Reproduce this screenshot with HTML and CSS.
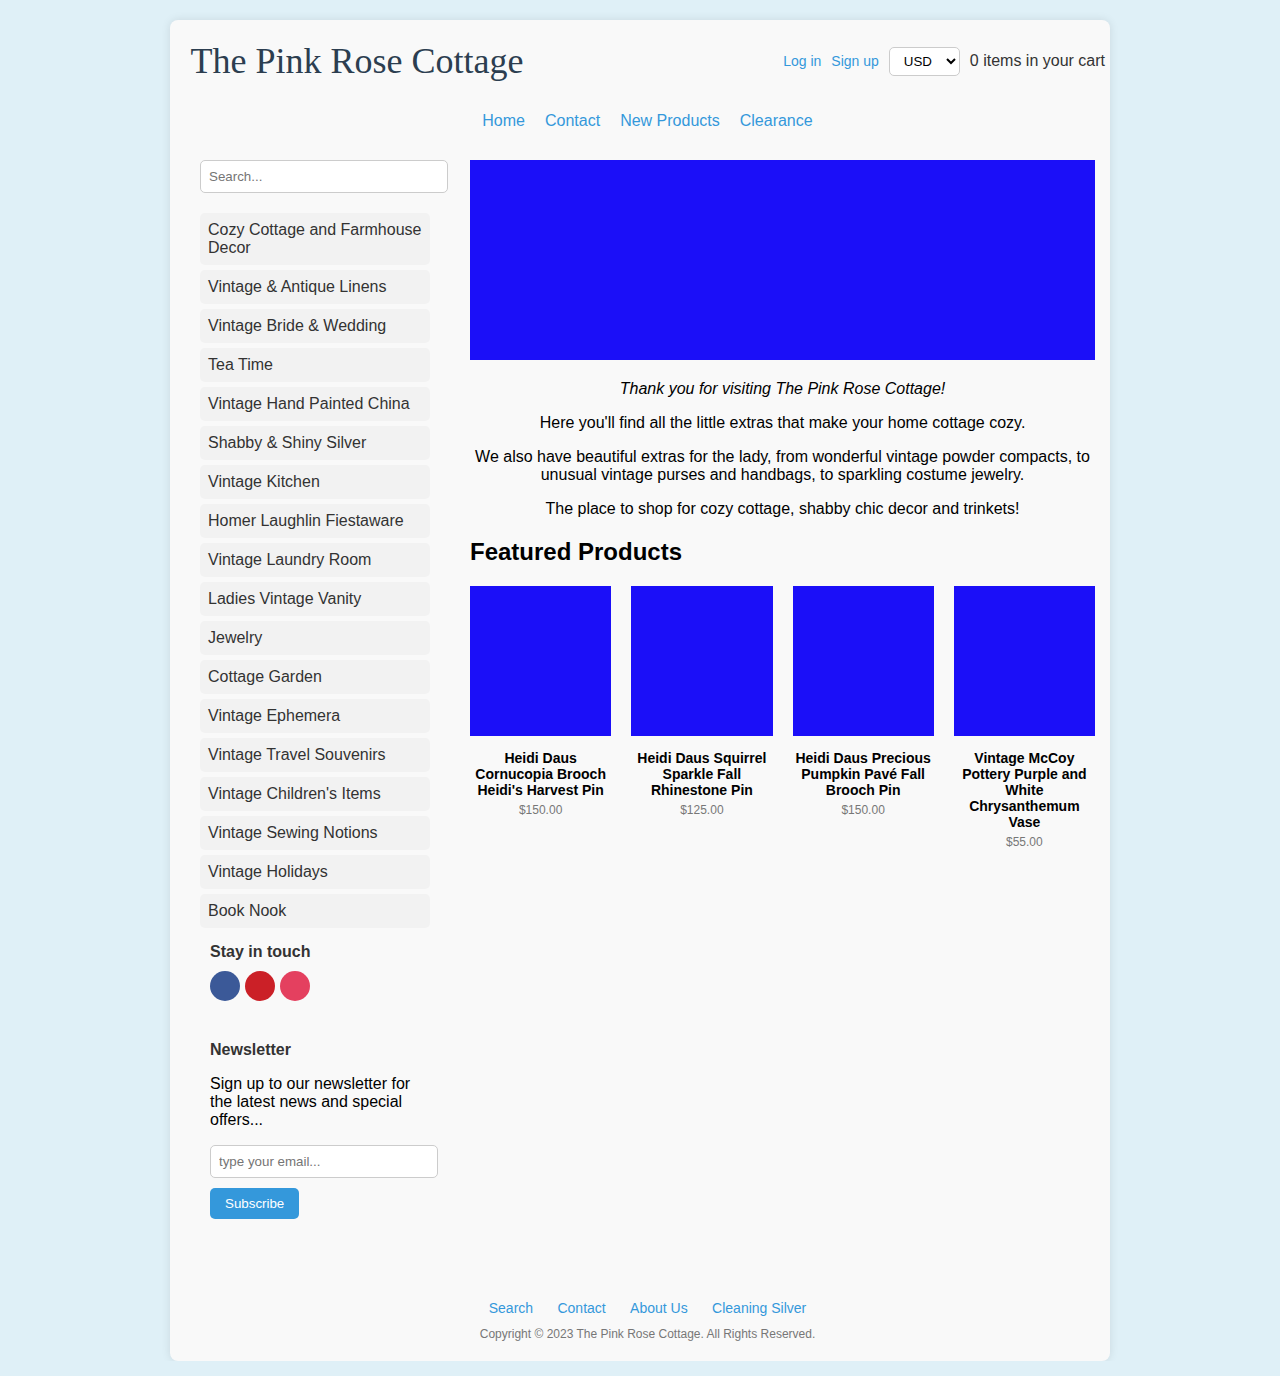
FILE: index.html
```html
<!DOCTYPE html>
<html lang="en">
<head>
<meta charset="UTF-8">
<title>The Pink Rose Cottage</title>
<link rel="stylesheet" href="styles.css">
</head>
<body>
<div class="page">
<div class="container">
  <header class="header">
    <div class="logo">The Pink Rose Cottage</div>
    <div class="account">
      <a href="#">Log in</a>
      <a href="#">Sign up</a>
      <select class="currency"><option>USD</option><option>EUR</option><option>GBP</option></select>
      <span class="cart">0 items in your cart</span>
    </div>
  </header>
  <nav class="nav">
    <a href="#">Home</a>
    <a href="#">Contact</a>
    <a href="#">New Products</a>
    <a href="#">Clearance</a>
  </nav>
  <div class="content">
    <aside class="sidebar">
      <input class="field search" type="text" placeholder="Search...">
      <ul class="categories">
        <li>Cozy Cottage and Farmhouse Decor</li>
        <li>Vintage &amp; Antique Linens</li>
        <li>Vintage Bride &amp; Wedding</li>
        <li>Tea Time</li>
        <li>Vintage Hand Painted China</li>
        <li>Shabby &amp; Shiny Silver</li>
        <li>Vintage Kitchen</li>
        <li>Homer Laughlin Fiestaware</li>
        <li>Vintage Laundry Room</li>
        <li>Ladies Vintage Vanity</li>
        <li>Jewelry</li>
        <li>Cottage Garden</li>
        <li>Vintage Ephemera</li>
        <li>Vintage Travel Souvenirs</li>
        <li>Vintage Children's Items</li>
        <li>Vintage Sewing Notions</li>
        <li>Vintage Holidays</li>
        <li>Book Nook</li>
      </ul>
      <section class="social">
        <h3>Stay in touch</h3>
        <div class="icons">
          <a class="icon facebook" href="#" aria-label="Facebook"></a>
          <a class="icon pinterest" href="#" aria-label="Pinterest"></a>
          <a class="icon instagram" href="#" aria-label="Instagram"></a>
        </div>
      </section>
      <section class="newsletter">
        <h3>Newsletter</h3>
        <p>Sign up to our newsletter for the latest news and special offers...</p>
        <input class="field" type="email" placeholder="type your email...">
        <button class="subscribe">Subscribe</button>
      </section>
    </aside>
    <main class="main">
      <div class="banner"></div>
      <div class="welcome">
        <p><em>Thank you for visiting The Pink Rose Cottage!</em></p>
        <p>Here you'll find all the little extras that make your home cottage cozy.</p>
        <p>We also have beautiful extras for the lady, from wonderful vintage powder compacts, to unusual vintage purses and handbags, to sparkling costume jewelry.</p>
        <p>The place to shop for cozy cottage, shabby chic decor and trinkets!</p>
      </div>
      <h2>Featured Products</h2>
      <div class="products">
        <article class="product"><div class="photo"></div><h4>Heidi Daus Cornucopia Brooch Heidi's Harvest Pin</h4><p>$150.00</p></article>
        <article class="product"><div class="photo"></div><h4>Heidi Daus Squirrel Sparkle Fall Rhinestone Pin</h4><p>$125.00</p></article>
        <article class="product"><div class="photo"></div><h4>Heidi Daus Precious Pumpkin Pavé Fall Brooch Pin</h4><p>$150.00</p></article>
        <article class="product"><div class="photo"></div><h4>Vintage McCoy Pottery Purple and White Chrysanthemum Vase</h4><p>$55.00</p></article>
      </div>
    </main>
  </div>
  <footer class="footer">
    <div class="footer-links">
      <a href="#">Search</a>
      <a href="#">Contact</a>
      <a href="#">About Us</a>
      <a href="#">Cleaning Silver</a>
    </div>
    <p>Copyright © 2023 The Pink Rose Cottage. All Rights Reserved.</p>
  </footer>
</div>
</div>
</body>
</html>
```
FILE: styles.css
```css
body {
  margin: 0;
  padding-bottom: 15px;
  background: #dff0f7;
  font-family: "Liberation Sans", Arial, sans-serif;
  font-size: 16px;
}
a { color: #3498db; text-decoration: none; }
h2, h3, h4, p, ul { margin: 0; padding: 0; }
.page { padding-top: 20px; overflow: hidden; }
.container {
  box-sizing: border-box;
  width: 940px;
  height: 1341px;
  margin: 0 auto;
  background: #f9f9f9;
  border-radius: 8px;
  box-shadow: 0 0 10px rgba(0, 0, 0, 0.1);
  display: flex;
  flex-direction: column;
}
.header {
  display: flex;
  justify-content: space-between;
  align-items: center;
  height: 82px;
  padding: 0 5px 0 20.5px;
}
.logo {
  font-family: "Liberation Serif", "Times New Roman", serif;
  font-size: 36px;
  color: #2c3e50;
}
.account { display: flex; align-items: center; gap: 10px; }
.account a { font-size: 14px; }
.currency {
  box-sizing: border-box;
  width: 71px;
  height: 29px;
  margin-top: 1px;
  padding: 5px 10px;
  border: 1px solid #ccc;
  border-radius: 5px;
  background: #fff;
  font-family: inherit;
  font-size: 13.333px;
}
.cart { color: #333; }
.nav {
  display: flex;
  justify-content: center;
  gap: 20px;
  padding: 10px 0 30px 15px;
  line-height: 18px;
}
.content { display: flex; padding: 0 15px 0 30px; }
.sidebar { width: 230px; margin-right: 40px; flex-shrink: 0; }
.field {
  display: block;
  box-sizing: content-box;
  width: 100%;
  padding: 8px;
  border: 1px solid #ccc;
  border-radius: 5px;
  font: 13.333px "Liberation Sans", Arial, sans-serif;
}
.search { margin-bottom: 20px; }
.categories { list-style: none; }
.categories li {
  padding: 8px;
  margin-bottom: 5px;
  border-radius: 5px;
  background: #f2f2f2;
  color: #333;
  line-height: 18px;
}
.social, .newsletter { padding: 10px; }
.social h3, .newsletter h3 { font-size: 16px; line-height: 18px; color: #333; }
.social h3 { margin-bottom: 10px; }
.icons { display: flex; gap: 5px; }
.icon { width: 30px; height: 30px; border-radius: 50%; }
.facebook { background: #3b5998; }
.pinterest { background: #cb2027; }
.instagram { background: #e4405f; }
.newsletter { margin-top: 20px; }
.newsletter p { margin: 16px 0; line-height: 18px; }
.subscribe {
  display: block;
  margin-top: 10px;
  padding: 8px 15px;
  border: 0;
  border-radius: 5px;
  background: #3498db;
  color: #fff;
  font: 13.333px "Liberation Sans", Arial, sans-serif;
}
.main { flex: 1; min-width: 0; }
.banner { height: 200px; margin-bottom: 20px; background: #1b0ff8; }
.welcome { text-align: center; line-height: 18px; }
.welcome p { margin-bottom: 16px; }
.main h2 { margin: 20px 0 21px; font-size: 24px; line-height: 27px; }
.products { display: grid; grid-template-columns: repeat(4, 1fr); gap: 20px; }
.product { text-align: center; }
.photo { height: 150px; background: #1b0ff8; }
.product h4 { margin: 14px 0 5px; font-size: 14px; line-height: 16px; }
.product p { font-size: 12px; line-height: 14px; color: #777; }
.footer { margin-top: auto; padding: 0 0 20px 15px; text-align: center; }
.footer-links { display: flex; justify-content: center; gap: 24.4px; margin-bottom: 11px; font-size: 14px; line-height: 16px; }
.footer p { font-size: 12px; line-height: 14px; color: #777; }
```
